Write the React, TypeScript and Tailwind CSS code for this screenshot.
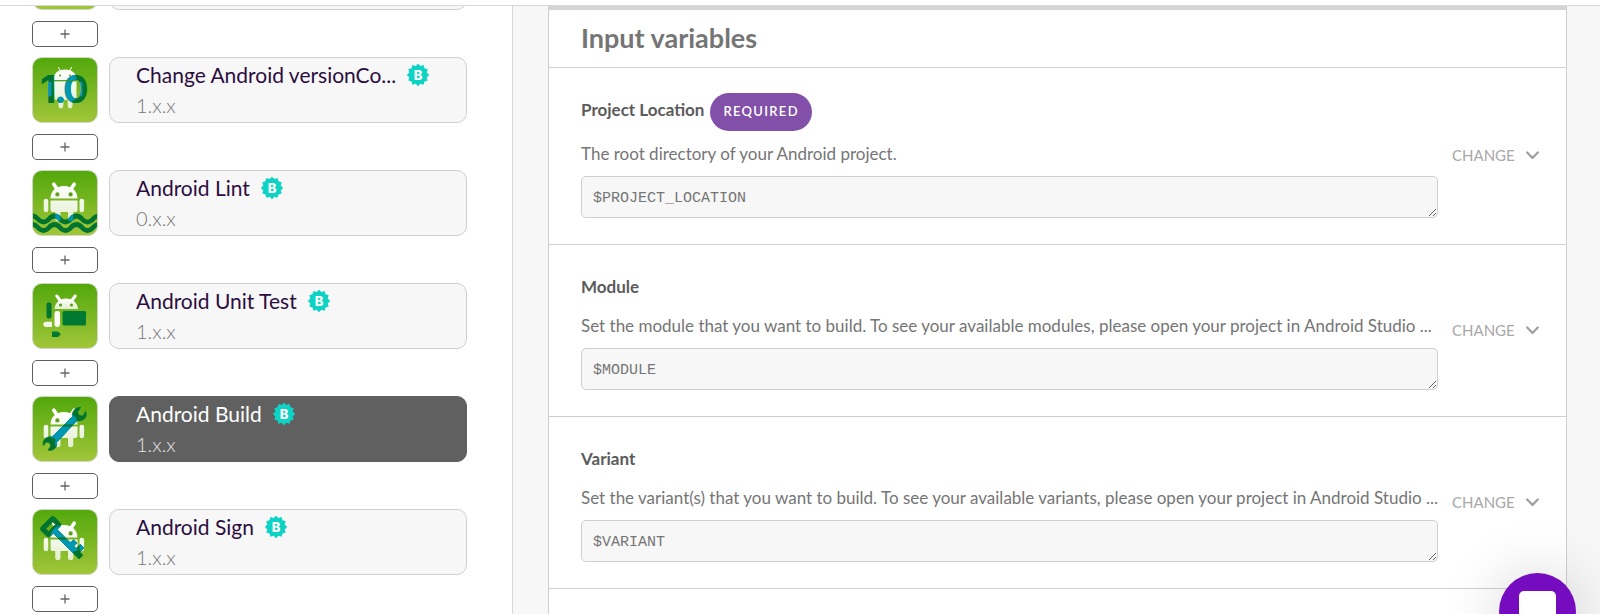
import type { ReactNode } from "react";

type Step = {
  title: string;
  version: string;
  icon: ReactNode;
  selected?: boolean;
};

type Variable = {
  id: string;
  label: string;
  description: string;
  value: string;
  required?: boolean;
};

const HEAD = "M18.5 28.5C18.5 21 24 16 32 16s13.5 5 13.5 12.5z";
const BODY =
  "M18.5 30.5h27v9.5a2 2 0 0 1-2 2h-2.2v6.5a2.6 2.6 0 0 1-5.3 0V42h-7.5v6.5a2.6 2.6 0 0 1-5.3 0V42h-2.7a2 2 0 0 1-2-2z";
const ARMS =
  "M11.7 31a2.3 2.3 0 0 1 4.6 0v9a2.3 2.3 0 0 1-4.6 0zM47.5 31a2.3 2.3 0 0 1 4.6 0v9a2.3 2.3 0 0 1-4.6 0z";
const ROBOT = `${HEAD}${BODY}${ARMS}`;

const SMALL_ROBOT =
  "M21.5 23C21.5 16.5 26 12.5 33 12.5S44.5 16.5 44.5 23zM21.5 24.3h23V41a2 2 0 0 1-2 2h-2v6a2.4 2.4 0 0 1-4.8 0v-6h-4.4v6a2.4 2.4 0 0 1-4.8 0v-6h-2a2 2 0 0 1-2-2z";
const SMALL_ARMS =
  "M15.5 26.5a2 2 0 0 1 4 0v11a2 2 0 0 1-4 0zM46.5 26.5a2 2 0 0 1 4 0v11a2 2 0 0 1-4 0z";

/* green rounded tile that every step icon sits on */
function Tile({ children }: { children?: ReactNode }) {
  return (
    <svg viewBox="0 0 66 66" className="size-[66px] shrink-0" aria-hidden>
      <defs>
        <linearGradient id="tile" x1="0" y1="0" x2="0" y2="1">
          <stop offset="0" stopColor="#52a80b" />
          <stop offset="1" stopColor="#a2c639" />
        </linearGradient>
        <linearGradient id="robot" x1="0" y1="0" x2="0" y2="1">
          <stop offset="0" stopColor="#ffffff" />
          <stop offset="1" stopColor="#e3efce" />
        </linearGradient>
        <clipPath id="tile-clip">
          <rect x="1" y="1" width="64" height="64" rx="9" />
        </clipPath>
        <clipPath id="robot-clip">
          <path d={ROBOT} />
        </clipPath>
        <clipPath id="small-robot-clip">
          <path d={SMALL_ROBOT + SMALL_ARMS} />
        </clipPath>
      </defs>
      <rect x="0.5" y="0.5" width="65" height="65" rx="9.5" fill="url(#tile)" stroke="#cfd6c4" />
      <g clipPath="url(#tile-clip)">{children}</g>
    </svg>
  );
}

function Robot() {
  return (
    <g>
      <path d={ROBOT} fill="url(#robot)" />
      <path d="M21.8 14.2l3 4.6M42.2 14.2l-3 4.6" stroke="#fff" strokeWidth="3.6" strokeLinecap="round" />
      <circle cx="25.4" cy="24.4" r="2.1" fill="#5f9f1a" />
      <circle cx="38.6" cy="24.4" r="2.1" fill="#5f9f1a" />
    </g>
  );
}

/* dark green shape that turns blue where it crosses the robot */
function Overlay({ clip = "url(#robot-clip)", children }: { clip?: string; children: ReactNode }) {
  return (
    <>
      <g className="text-[#00742f]">{children}</g>
      <g className="text-[#0097b2]" clipPath={clip} aria-hidden>
        {children}
      </g>
    </>
  );
}

function VersionIcon() {
  return (
    <Tile>
      <path d="M26.5 10.5l2.5 4.5M39.5 10.5L37 15" stroke="#fff" strokeWidth="1" strokeLinecap="round" />
      <path d={SMALL_ROBOT} fill="url(#robot)" />
      <circle cx="28" cy="18.5" r="1" fill="#5f9f1a" />
      <circle cx="38" cy="18.5" r="1" fill="#5f9f1a" />
      <Overlay clip="url(#small-robot-clip)">
        <text x="8 22 31" y="46" fontSize="38" fontWeight="700" fontFamily="Inter, sans-serif" fill="currentColor">
          1.0
        </text>
      </Overlay>
      <path d="M21.5 23.7h23" stroke="#3f9a3a" strokeWidth="1" />
    </Tile>
  );
}

function LintIcon() {
  return (
    <Tile>
      <Robot />
      <Overlay>
        <path
          d="M-5 49q5.5-6 11 0t11 0t11 0t11 0t11 0t11 0t11 0M-5 57.5q5.5-6 11 0t11 0t11 0t11 0t11 0t11 0t11 0"
          stroke="currentColor"
          strokeWidth="4.8"
          fill="none"
        />
      </Overlay>
    </Tile>
  );
}

function UnitTestIcon() {
  return (
    <Tile>
      <path d="M22.5 26C23 20 27.5 15.5 34 15.5S45.5 20 46 26z" fill="url(#robot)" />
      <path d="M24.8 13l3 4M43.2 13l-3 4" stroke="#fff" strokeWidth="3" strokeLinecap="round" />
      <circle cx="28.5" cy="22" r="1.6" fill="#5f9f1a" />
      <circle cx="39.5" cy="22" r="1.6" fill="#5f9f1a" />
      <rect x="14.5" y="19.5" width="5" height="16" rx="2" fill="#007430" />
      <rect x="22.5" y="28" width="5.5" height="16" rx="2.4" fill="#fbfdf6" />
      <rect x="30.5" y="28" width="23.5" height="14.5" rx="1.5" fill="#007a33" />
      <path d="M20 38.7V44h-6a2.65 2.65 0 0 1 0-5.3z" fill="#f1f7e5" />
      <path d="M20 48.5h6l2.8 2.7L26 54h-6z" fill="#007a33" />
    </Tile>
  );
}

function BuildIcon() {
  return (
    <Tile>
      <Robot />
      <Overlay>
        <path
          d="M40.5 20.5c-.8-4.5 2.5-9.5 8-9l-3 4.5 1.500 3.500 4 .5 2.500-4.500c2.500 4.500-1.500 10.500-8.500 9L24.500 46.500c1 4.500-3 9-8.500 7.500l3-4-1.500-3.500-3.500-.5-2.500 3.500c-1.500-4.500 2.500-9.500 8.500-8.500z"
          fill="currentColor"
          stroke="currentColor"
          strokeWidth="0.8"
          strokeLinejoin="round"
        />
      </Overlay>
    </Tile>
  );
}

function SignIcon() {
  return (
    <Tile>
      <Robot />
      <Overlay>
        <g transform="translate(19 18) rotate(45)">
          <path
            d="M-4-9.500H3a3 3 0 0 1 3 3V-2.500H25V-7h4.500v4.500H33V-8.500h5v6h4.500v5.200H6V6.500a3 3 0 0 1-3 3H-4a3 3 0 0 1-3-3v-13a3 3 0 0 1 3-3zM-2.500-5v10h4V-5z"
            fill="currentColor"
            fillRule="evenodd"
            stroke="currentColor"
            strokeWidth="0.8"
          />
        </g>
      </Overlay>
    </Tile>
  );
}

function VerifiedBadge() {
  return (
    <svg viewBox="0 0 24 24" className="size-6 shrink-0" role="img" aria-label="Official">
      <path
        d="M12 .8l2.4 2.3 3.2-1 .9 3.2 3.2.9-1 3.2L23.2 12l-2.5 2.4 1 3.2-3.2.9-.9 3.2-3.2-1L12 23.2l-2.4-2.5-3.2 1-.9-3.2-3.2-.9 1-3.2L.8 12l2.5-2.6-1-3.2 3.2-.9.9-3.2 3.2 1z"
        fill="#0dd3c5"
      />
      <text x="12" y="16.5" textAnchor="middle" fontSize="13" fontWeight="800" fontFamily="Inter, sans-serif" fill="#fff">
        B
      </text>
    </svg>
  );
}

const steps: Step[] = [
  { title: "Change Android versionCo...", version: "1.x.x", icon: <VersionIcon /> },
  { title: "Android Lint", version: "0.x.x", icon: <LintIcon /> },
  { title: "Android Unit Test", version: "1.x.x", icon: <UnitTestIcon /> },
  { title: "Android Build", version: "1.x.x", icon: <BuildIcon />, selected: true },
  { title: "Android Sign", version: "1.x.x", icon: <SignIcon /> },
];

const variables: Variable[] = [
  {
    id: "project-location",
    label: "Project Location",
    description: "The root directory of your Android project.",
    value: "$PROJECT_LOCATION",
    required: true,
  },
  {
    id: "module",
    label: "Module",
    description:
      "Set the module that you want to build. To see your available modules, please open your project in Android Studio ...",
    value: "$MODULE",
  },
  {
    id: "variant",
    label: "Variant",
    description:
      "Set the variant(s) that you want to build. To see your available variants, please open your project in Android Studio ...",
    value: "$VARIANT",
  },
];

function AddStepButton() {
  return (
    <button
      type="button"
      aria-label="Add step"
      className="flex h-[26px] w-[66px] items-center justify-center rounded-[5px] border border-[#5e5e5e] bg-white"
    >
      <svg viewBox="0 0 10 10" className="size-[10px]" stroke="#666" strokeWidth="1.3" aria-hidden>
        <path d="M5 0.5v9M0.5 5h9" />
      </svg>
    </button>
  );
}

function StepCard({ step }: { step: Step }) {
  return (
    <button
      type="button"
      className={
        step.selected
          ? "flex h-[66px] min-w-0 flex-1 flex-col justify-center gap-[6px] rounded-[10px] border border-[#606060] bg-[#606060] px-[26px] text-left text-white"
          : "flex h-[66px] min-w-0 flex-1 flex-col justify-center gap-[6px] rounded-[10px] border border-[#cfcfcf] bg-[#f7f7f7] px-[26px] text-left text-[#2b0e3f]"
      }
    >
      <span className="flex max-w-full items-center gap-[10px]">
        <span className="truncate text-[21px] leading-6">{step.title}</span>
        <VerifiedBadge />
      </span>
      <span
        className={
          step.selected
            ? "text-xl leading-6 font-light text-[#e4e4e4]"
            : "text-xl leading-6 font-light text-[#777]"
        }
      >
        {step.version}
      </span>
    </button>
  );
}

function VariableRow({ variable }: { variable: Variable }) {
  return (
    <div className="flex items-center gap-[14px] border-b border-[#cfcfcf] pt-[25px] pr-[27px] pb-[26px] pl-8">
      <div className="min-w-0 flex-1">
        <div className="flex items-start gap-1.5">
          <label htmlFor={variable.id} className="text-[17px] leading-[33px] font-bold text-[#5b5b5b]">
            {variable.label}
          </label>
          {variable.required && (
            <span className="flex h-[38px] items-center rounded-full bg-[#8250a8] px-[13px] text-[13px] font-semibold tracking-widest text-white">
              REQUIRED
            </span>
          )}
        </div>
        <p className="mt-[11px] text-[17px] leading-6 whitespace-nowrap text-[#757575]">{variable.description}</p>
        <textarea
          id={variable.id}
          rows={1}
          defaultValue={variable.value}
          className="mt-[10px] block h-[42px] w-full resize overflow-hidden rounded-[5px] border border-[#cfcfcf] bg-[#f7f7f7] px-[11px] pt-3 pb-2 font-['Liberation_Mono',monospace] text-[15px] leading-5 text-[#757575]"
        />
      </div>
      <button type="button" className="flex w-[87px] items-center justify-between text-[15px] text-[#a8a8a8]">
        CHANGE
        <svg viewBox="0 0 13 9" className="h-[9px] w-[13px]" fill="none" stroke="#a0a0a0" strokeWidth="2.3" aria-hidden>
          <path d="M1.2 1.5L6.5 7l5.3-5.5" strokeLinecap="round" strokeLinejoin="round" />
        </svg>
      </button>
    </div>
  );
}

export default function App() {
  return (
    <div className="flex h-screen flex-col overflow-hidden bg-white font-[Lato,sans-serif]">
      <header className="h-[6px] shrink-0 border-b border-[#dadada] bg-white" />

      <div className="flex min-h-0 flex-1">
        {/* workflow steps, scrolled part-way down */}
        <aside className="w-[513px] shrink-0 overflow-hidden border-r border-[#d6d6d6] pr-[45px] pl-8">
          <div className="-mt-[62px] flex gap-[11px]">
            <Tile />
            <div className="h-[66px] flex-1 rounded-[10px] border border-[#cfcfcf] bg-[#f7f7f7]" />
          </div>
          <div className="mt-[11px]">
            <AddStepButton />
          </div>
          {steps.map((step) => (
            <div key={step.title} className="mt-[10px]">
              <div className="flex gap-[11px]">
                {step.icon}
                <StepCard step={step} />
              </div>
              <div className="mt-[11px]">
                <AddStepButton />
              </div>
            </div>
          ))}
        </aside>

        <main className="min-w-0 flex-1 overflow-hidden bg-[#f7f7f7] pr-[33px] pl-[35px]">
          <section className="min-h-full border-x border-[#cfcfcf] bg-white">
            <div className="h-1 bg-[#d4d4d4]" />
            <h2 className="border-b border-[#cfcfcf] px-8 pt-3 pb-[13px] text-[27px] leading-8 font-bold text-[#757575]">
              Input variables
            </h2>
            {variables.map((variable) => (
              <VariableRow key={variable.id} variable={variable} />
            ))}
          </section>
        </main>
      </div>

      {/* chat launcher */}
      <button
        type="button"
        aria-label="Open chat"
        className="fixed right-6 -bottom-9 flex size-[77px] justify-center rounded-full bg-[#750cc0] pt-[18px] shadow-[0_2px_60px_rgba(0,0,0,0.18)]"
      >
        <span className="h-[42px] w-[37px] rounded-[5px] bg-white" />
      </button>
    </div>
  );
}
